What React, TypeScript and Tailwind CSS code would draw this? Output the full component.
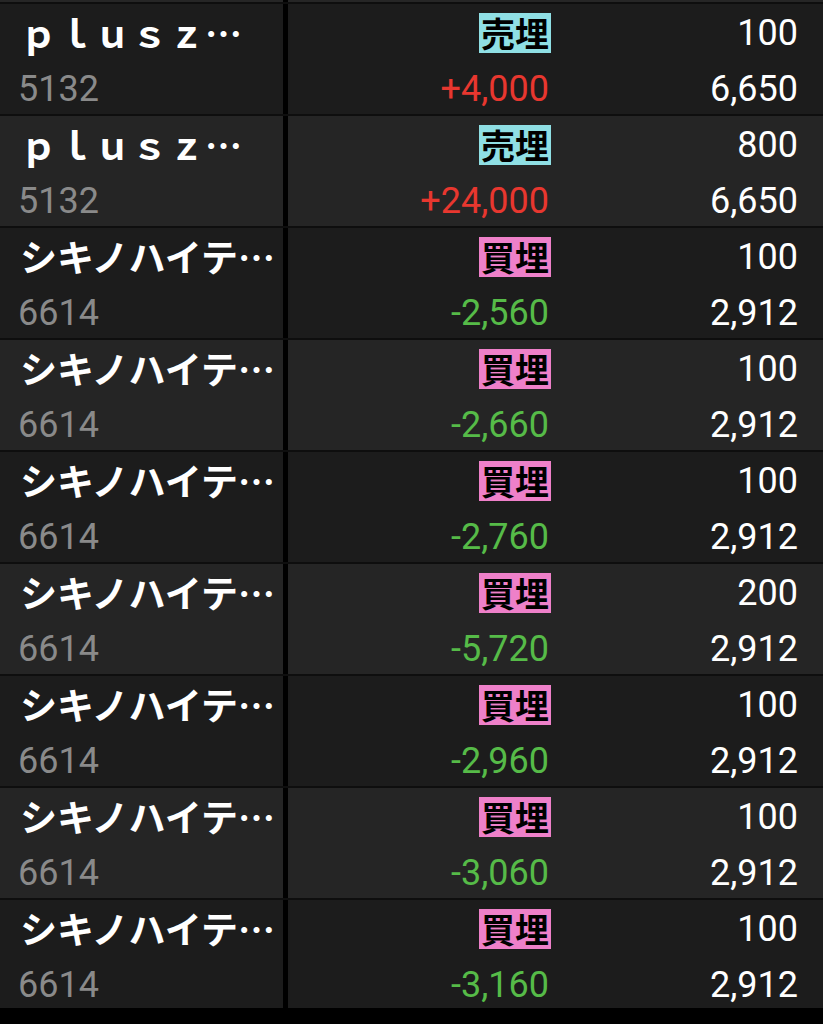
import React from "react";

type Trade = {
  name: string;
  code: string;
  side: "sell" | "buy";
  qty: string;
  pl: string;
  price: string;
};

const trades: Trade[] = [
  { name: "ｐｌｕｓｚ", code: "5132", side: "sell", qty: "100", pl: "+4,000", price: "6,650" },
  { name: "ｐｌｕｓｚ", code: "5132", side: "sell", qty: "800", pl: "+24,000", price: "6,650" },
  { name: "シキノハイテ", code: "6614", side: "buy", qty: "100", pl: "-2,560", price: "2,912" },
  { name: "シキノハイテ", code: "6614", side: "buy", qty: "100", pl: "-2,660", price: "2,912" },
  { name: "シキノハイテ", code: "6614", side: "buy", qty: "100", pl: "-2,760", price: "2,912" },
  { name: "シキノハイテ", code: "6614", side: "buy", qty: "200", pl: "-5,720", price: "2,912" },
  { name: "シキノハイテ", code: "6614", side: "buy", qty: "100", pl: "-2,960", price: "2,912" },
  { name: "シキノハイテ", code: "6614", side: "buy", qty: "100", pl: "-3,060", price: "2,912" },
  { name: "シキノハイテ", code: "6614", side: "buy", qty: "100", pl: "-3,160", price: "2,912" },
];

const jp = "font-['Noto_Sans_CJK_JP','Noto_Sans',sans-serif]";
const num = "font-['Roboto','Noto_Sans_CJK_JP',sans-serif]";

const SideBadge = ({ side }: { side: Trade["side"] }) => {
  const sell = side === "sell";
  return (
    <span
      className={`${jp} inline-block h-[40px] px-[2px] text-[34px] leading-[40px] font-bold text-black ${
        sell ? "bg-[#8fdfe4]" : "bg-[#ee80c9]"
      }`}
    >
      {sell ? "売埋" : "買埋"}
    </span>
  );
};

const TradeRow = ({ trade, index }: { trade: Trade; index: number }) => {
  const bg = index % 2 === 0 ? "bg-[#1c1c1c]" : "bg-[#252525]";
  const plColor = trade.pl.startsWith("+") ? "text-[#e8372f]" : "text-[#56bb48]";
  return (
    <div className={`grid grid-cols-[283px_5px_263px_1fr] border-b-2 border-[#0e0e0e] ${bg}`}>
      <div className="flex flex-col pl-[20px]">
        <div className={`${jp} flex h-[57px] items-center text-[37px] font-bold whitespace-nowrap text-white`}>
          <span>{trade.name}</span>
          <span className="font-['Noto_Sans_CJK_JP']">…</span>
        </div>
        <div className={`${num} -ml-[2px] flex h-[53px] items-center pt-[3px] text-[36px] text-[#8a8a8a]`}>
          {trade.code}
        </div>
      </div>
      <div className="bg-black" />
      <div className="flex flex-col items-end">
        <div className="flex h-[57px] items-center">
          <SideBadge side={trade.side} />
        </div>
        <div className={`${num} flex h-[53px] items-center pt-[3px] pr-[2px] text-[36px] ${plColor}`}>
          {trade.pl}
        </div>
      </div>
      <div className={`${num} flex flex-col items-end pr-[25px] text-[36px] text-white`}>
        <div className="flex h-[57px] items-center">{trade.qty}</div>
        <div className="flex h-[53px] items-center pt-[3px]">{trade.price}</div>
      </div>
    </div>
  );
};

export default function App() {
  return (
    <div className="h-[1024px] w-[823px] bg-black">
      <div className="h-[1008px] overflow-hidden">
        <div className="grid h-[2px] grid-cols-[283px_5px_1fr]">
          <div className="bg-[#262626]" />
          <div className="bg-black" />
          <div className="bg-[#262626]" />
        </div>
        <div className="h-[2px] bg-[#0e0e0e]" />
        {trades.map((t, i) => (
          <TradeRow key={i} trade={t} index={i} />
        ))}
      </div>
    </div>
  );
}
